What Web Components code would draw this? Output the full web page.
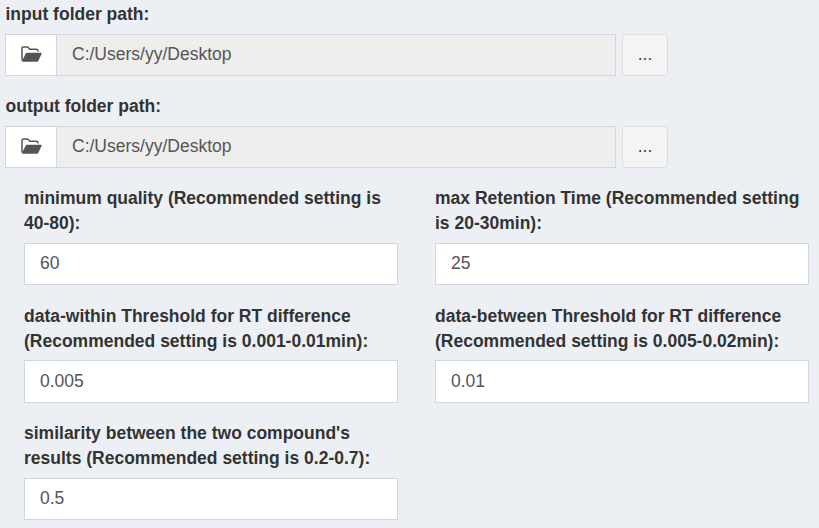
<!DOCTYPE html>
<html lang="en">
<head>
<meta charset="utf-8">
<title>Settings</title>
<style>
body { margin: 0; background: #ecf0f5; color: #333; font: 17.5px/25px "Liberation Sans", Arial, sans-serif; }
</style>
</head>
<body>
<settings-form>
  <folder-field value="C:/Users/yy/Desktop">input folder path:</folder-field>
  <folder-field value="C:/Users/yy/Desktop">output folder path:</folder-field>
  <number-field slot="numbers" value="60">minimum quality (Recommended setting is 40-80):</number-field>
  <number-field slot="numbers" value="25">max Retention Time (Recommended setting is 20-30min):</number-field>
  <number-field slot="numbers" value="0.005">data-within Threshold for RT difference (Recommended setting is 0.001-0.01min):</number-field>
  <number-field slot="numbers" value="0.01">data-between Threshold for RT difference (Recommended setting is 0.005-0.02min):</number-field>
  <number-field slot="numbers" value="0.5">similarity between the two compound's results (Recommended setting is 0.2-0.7):</number-field>
</settings-form>
<script>
const shared = `
  *, *::before, *::after { box-sizing: border-box; }
  label { display: block; font-weight: bold; }
  input { display: block; width: 100%; height: 42px; margin: 0; padding: 0 15px 2px; border: 1px solid #d2d6de;
    border-radius: 0; background: #fff; color: #555; font: inherit; outline: 0; }
`;

class FolderIcon extends HTMLElement {
  constructor() {
    super();
    this.attachShadow({ mode: 'open' }).innerHTML = `
      <style>:host { display: block; width: 21px; height: 16px; } svg { display: block; }</style>
      <svg width="21" height="16" viewBox="0 0 21 16" aria-hidden="true">
        <path d="M1 14.6V2Q1 .9 2 .9H6.3Q7 .9 7.5 1.6L8.7 3.2H15.5Q16.6 3.2 16.9 4.3V5.6" fill="none" stroke="#555" stroke-width="1.5"/>
        <path d="M6 6.7H20Q21.1 6.7 20.6 7.8L17.5 14.6Q17 15.8 15.9 15.8H1.5Q.6 15.8 1.1 14.7L4.6 7.7Q5.1 6.7 6 6.7Z" fill="#555"/>
      </svg>`;
  }
}

class PickButton extends HTMLElement {
  constructor() {
    super();
    this.attachShadow({ mode: 'open' }).innerHTML = `
      <style>
        :host { display: block; flex: none; width: 46px; height: 42px; }
        button { display: block; box-sizing: border-box; width: 100%; height: 100%; margin: 0; padding: 0 0 2px;
          border: 1px solid #ddd; border-radius: 3.75px; background: #f4f4f4; color: #444; font: inherit; }
      </style>
      <button type="button"><slot></slot></button>`;
  }
}

class FolderField extends HTMLElement {
  constructor() {
    super();
    this.attachShadow({ mode: 'open' }).innerHTML = `
      <style>${shared}
        :host { display: block; }
        label { margin-bottom: 7px; padding-left: .5px; }
        .row { display: flex; }
        .addon { display: flex; flex: none; align-items: center; justify-content: center; width: 51px; height: 42px;
          padding-left: 1px; padding-bottom: 2px; border: 1px solid #d2d6de; border-right: 0; background: #fff; }
        input { flex: none; width: 560px; margin-right: 6px; background: #eee; }
      </style>
      <label for="path"><slot></slot></label>
      <div class="row">
        <span class="addon"><folder-icon></folder-icon></span>
        <input id="path" type="text" readonly>
        <pick-button>...</pick-button>
      </div>`;
  }
  connectedCallback() {
    this.shadowRoot.querySelector('input').value = this.getAttribute('value');
  }
}

class NumberField extends HTMLElement {
  constructor() {
    super();
    this.attachShadow({ mode: 'open' }).innerHTML = `
      <style>${shared}
        :host { display: block; }
        label { margin-bottom: 6.5px; }
        input { height: 42.5px; padding-bottom: .75px; }
      </style>
      <label for="num"><slot></slot></label>
      <input id="num" type="text" inputmode="decimal">`;
  }
  connectedCallback() {
    this.shadowRoot.querySelector('input').value = this.getAttribute('value');
  }
}

class SettingsForm extends HTMLElement {
  constructor() {
    super();
    this.attachShadow({ mode: 'open' }).innerHTML = `
      <style>
        :host { display: block; box-sizing: border-box; height: 528px; overflow: hidden; padding-top: 2px; }
        .folders { display: grid; row-gap: 18px; padding-left: 5px; }
        .numbers { display: grid; grid-template-columns: 374px 374px; column-gap: 37px; row-gap: 18.5px;
          padding-left: 24px; margin-top: 18.25px; }
      </style>
      <div class="folders"><slot></slot></div>
      <div class="numbers"><slot name="numbers"></slot></div>`;
  }
}

customElements.define('folder-icon', FolderIcon);
customElements.define('pick-button', PickButton);
customElements.define('folder-field', FolderField);
customElements.define('number-field', NumberField);
customElements.define('settings-form', SettingsForm);
</script>
</body>
</html>
